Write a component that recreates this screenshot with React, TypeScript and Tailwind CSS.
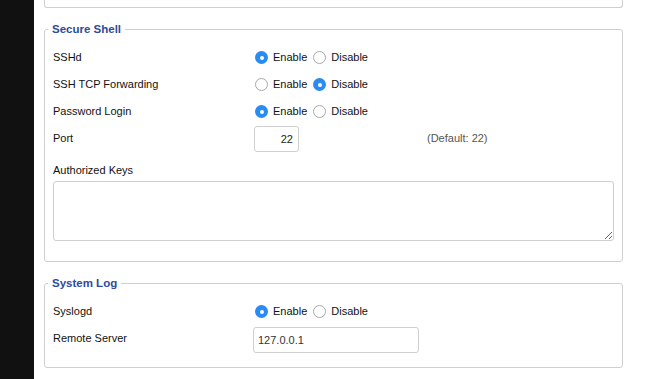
import React from "react";

function Radio({ checked }: { checked: boolean }) {
  return checked ? (
    <span className="inline-flex w-[13px] h-[13px] rounded-full bg-[#2a8bf2] items-center justify-center">
      <span className="w-[4px] h-[4px] rounded-full bg-white" />
    </span>
  ) : (
    <span className="inline-block w-[13px] h-[13px] rounded-full border border-[#a8a8a8] bg-white" />
  );
}

function Toggle({ on }: { on: boolean }) {
  return (
    <div className="flex items-center">
      <Radio checked={on} />
      <span className="ml-[5px]">Enable</span>
      <span className="ml-[6px] flex items-center">
        <Radio checked={!on} />
      </span>
      <span className="ml-[5px]">Disable</span>
    </div>
  );
}

function Row({ label, children }: { label: string; children?: React.ReactNode }) {
  return (
    <div className="flex items-center h-[27px]">
      <div className="w-[202px]">{label}</div>
      {children}
    </div>
  );
}

export default function App() {
  return (
    <div
      className="flex w-[662px] h-[379px] overflow-hidden bg-white text-[11px] text-[#111]"
      style={{ fontFamily: '"Liberation Sans", Arial, sans-serif' }}
    >
      <div className="w-[34px] shrink-0 bg-[#111111]" />
      <div className="pl-[10px]">
        {/* tail of previous panel */}
        <div className="w-[579px] h-[8px] border border-t-0 border-[#cfcfcf] rounded-b-[3px]" />

        {/* Secure Shell */}
        <fieldset className="w-[579px] mt-[14px] border border-[#cfcfcf] rounded-[3px] px-[8px] pb-[20px]">
          <legend className="ml-[-5px] px-[4px] font-bold text-[11.5px] leading-[14px] text-[#2e4a9b]">
            Secure Shell
          </legend>
          <div className="pt-[8px]">
            <Row label="SSHd">
              <Toggle on={true} />
            </Row>
            <Row label="SSH TCP Forwarding">
              <Toggle on={false} />
            </Row>
            <Row label="Password Login">
              <Toggle on={true} />
            </Row>
            <Row label="Port">
              <input
                defaultValue="22"
                className="w-[45px] h-[26px] -ml-[1px] border border-[#cfcfcf] rounded-[3px] text-right pr-[5px] text-[#222] outline-none"
              />
              <span className="ml-[128px] text-[#555]">(Default: 22)</span>
            </Row>
            <div className="mt-[11px] leading-[14px]">Authorized Keys</div>
            <textarea className="block mt-[4px] w-[561px] h-[60px] border border-[#cfcfcf] rounded-[3px] outline-none" />
          </div>
        </fieldset>

        {/* System Log */}
        <fieldset className="w-[579px] mt-[14px] border border-[#cfcfcf] rounded-[3px] px-[8px] pb-[15px]">
          <legend className="ml-[-5px] px-[4px] font-bold text-[11.5px] leading-[14px] text-[#2e4a9b]">
            System Log
          </legend>
          <div className="pt-[8px]">
            <Row label="Syslogd">
              <Toggle on={true} />
            </Row>
            <Row label="Remote Server">
              <input
                defaultValue="127.0.0.1"
                className="w-[166px] h-[26px] -ml-[2px] mt-[2px] border border-[#cfcfcf] rounded-[3px] px-[4px] text-[#333] outline-none"
              />
            </Row>
          </div>
        </fieldset>
      </div>
    </div>
  );
}
